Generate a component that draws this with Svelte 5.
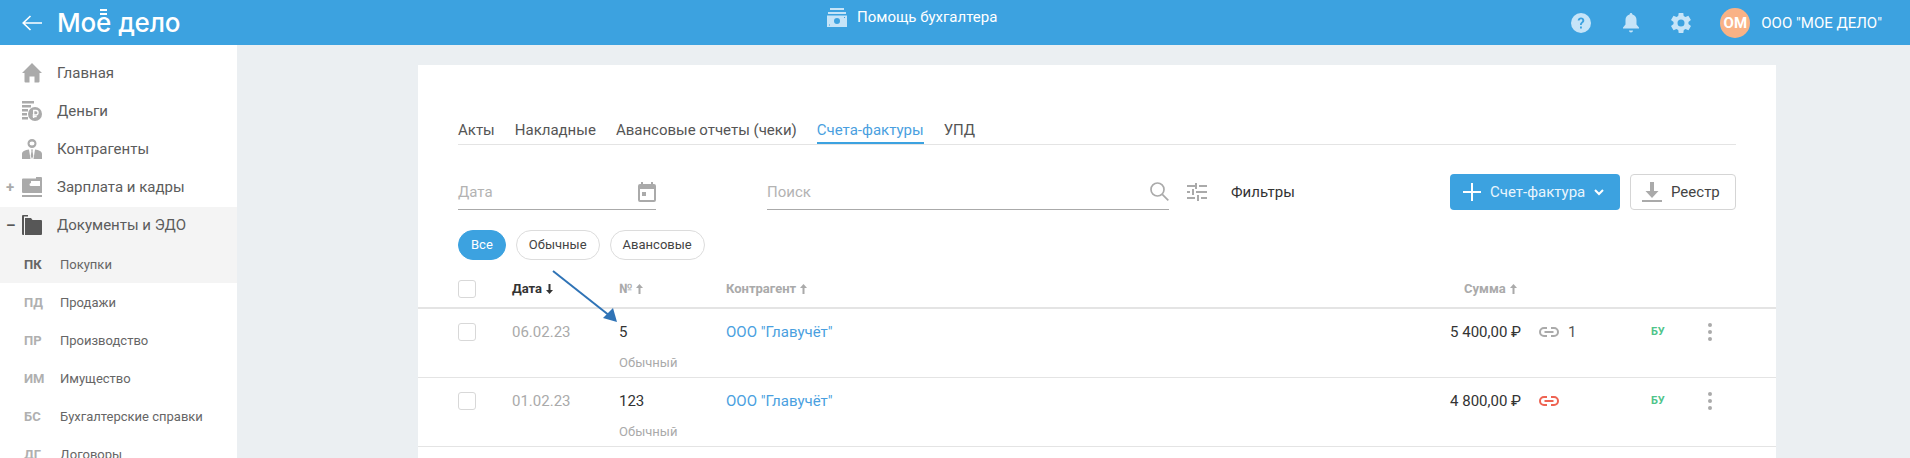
<script>
  const subs = [
    ['ПД', 'Продажи'],
    ['ПР', 'Производство'],
    ['ИМ', 'Имущество'],
    ['БС', 'Бухгалтерские справки'],
    ['ДГ', 'Договоры']
  ];
  const tabs = ['Акты', 'Накладные', 'Авансовые отчеты (чеки)', 'Счета-фактуры', 'УПД'];
  const rows = [
    { date: '06.02.23', num: '5', sum: '5 400,00 ₽', linked: true },
    { date: '01.02.23', num: '123', sum: '4 800,00 ₽', linked: false }
  ];
</script>

{#snippet up()}
  <svg class="sort" width="7" height="10" viewBox="0 0 7 10" fill="currentColor"><path d="M3.500 0 7 4H4.500v6h-2V4H0z"/></svg>
{/snippet}

<div class="page">
  <header class="top">
    <div class="brand">
      <svg class="back" width="20" height="16" viewBox="0 0 20 16" fill="none" stroke="#fff" stroke-width="1.6"><path d="M20 8H1M8.500 1 1.200 8l7.300 7"/></svg>
      <div class="logo"><span>Мо</span><span class="yo"><span class="yo-glyph">ё</span></span><span class="logo-sm">дело</span></div>
    </div>
    <div class="help">
      <svg width="20" height="20" viewBox="0 0 20 20" fill="#c6e4f8"><rect x="3" y="1" width="14" height="2"/><rect x="1" y="5" width="18" height="2"/><path fill-rule="evenodd" d="M0 8.500h20V20H0zM10 11a3 3 0 1 0 0 6 3 3 0 0 0 0-6zM2 17.500v1h1v-1zM17 10v1h1v-1z"/></svg>
      <span>Помощь бухгалтера</span>
    </div>
    <div class="tools">
      <svg class="tool" width="20" height="20" viewBox="0 0 20 20"><circle cx="10" cy="10" r="10" fill="#c6e4f8"/><path d="M6.700 7.600C6.800 5.600 8.200 4.500 10 4.500s3.300 1.100 3.300 2.900c0 2.300-2.500 2.400-2.500 4.600H9c0-3 2.300-3 2.300-4.600 0-.7-.5-1.200-1.300-1.200s-1.300.6-1.400 1.400zM9 13.500h1.900v2H9z" fill="#3ca2e0"/></svg>
      <svg class="tool" width="20" height="20" viewBox="0 0 20 20" fill="#c6e4f8"><path d="M10 0c.8 0 1.400.6 1.400 1.500 2.600.6 4.100 2.800 4.100 5.500v4.500l2.500 3v1H2v-1l2.500-3V7c0-2.700 1.500-4.900 4.100-5.500C8.600.6 9.200 0 10 0zM8 17.500h4c0 1.200-.9 2-2 2s-2-.8-2-2z"/></svg>
      <svg class="tool gear" width="20" height="20" viewBox="2 2 20 20" fill="#c6e4f8"><path fill-rule="evenodd" d="M19.400 13c.1-.3.100-.7.100-1s0-.7-.1-1l2.500-2-2.500-4.300-3 1.200c-.5-.4-1.100-.7-1.700-1L14.300 2H9.700l-.5 3c-.6.300-1.200.6-1.700 1l-3-1.200L2 9l2.600 2c-.1.300-.1.700-.1 1s0 .7.100 1L2 15l2.500 4.300 3-1.200c.5.400 1.100.7 1.700 1l.5 2.900h4.600l.5-3c.6-.3 1.200-.6 1.700-1l3 1.200L22 15zM12 15.500a3.500 3.500 0 1 1 0-7 3.500 3.500 0 0 1 0 7z"/></svg>
      <div class="avatar">ОМ</div>
      <span class="org">ООО "МОЕ ДЕЛО"</span>
    </div>
  </header>

  <div class="body">
    <nav class="side">
      <div class="nav-item">
        <svg class="nav-ico" width="20" height="20" viewBox="0 0 20 20" fill="#aaa"><path d="M10 0 20 10h-2.500v8.500q0 1-1 1H12.500v-6h-5v6H3.500q-1 0-1-1V10H0z"/></svg>
        <span>Главная</span>
      </div>
      <div class="nav-item">
        <svg class="nav-ico" width="20" height="20" viewBox="0 0 20 20" fill="#aaa"><rect x="0" y="0" width="12" height="2.500"/><rect x="0" y="4" width="9" height="2.500"/><rect x="0" y="8" width="6" height="2.500"/><rect x="0" y="12" width="5" height="2.500"/><rect x="0" y="16" width="6" height="2.500"/><circle cx="13" cy="13" r="7"/><path d="M11.700 17v-7.500h2.200a2 2 0 0 1 0 4.300h-3.200M10.700 15.500h4" fill="none" stroke="#fff" stroke-width="1.300"/></svg>
        <span>Деньги</span>
      </div>
      <div class="nav-item">
        <svg class="nav-ico" width="20" height="20" viewBox="0 0 20 20" fill="#aaa"><path fill-rule="evenodd" d="M10 0a4.500 4.500 0 1 1 0 9 4.500 4.500 0 0 1 0-9zm0 2.500a2.500 2 0 1 0 0 4 2.500 2 0 0 0 0-4z"/><path d="M0 20v-5c0-2.500 3-4 7-4.500L8.500 20zM20 20v-5c0-2.500-3-4-7-4.500L11.500 20zM9 10.500h2l-.5 1.500.8 5-1.300 3-1.300-3 .8-5z"/></svg>
        <span>Контрагенты</span>
      </div>
      <div class="nav-item">
        <span class="mark">+</span>
        <svg class="nav-ico" width="20" height="20" viewBox="0 0 20 20" fill="#aaa"><path fill-rule="evenodd" d="M0 2.500q0-1 1-1h13v-1.500h5q1 0 1 1V16H1q-1 0-1-1zM9 6a1 1 0 0 0 0 3h9V4H9z"/><rect x="0" y="18" width="20" height="2"/></svg>
        <span>Зарплата и кадры</span>
      </div>
      <div class="open">
        <div class="nav-item dark">
          <span class="mark">–</span>
          <svg class="nav-ico" width="20" height="20" viewBox="0 0 20 20" fill="#575757"><path d="M0 1q0-1 1-1h5v1.500H2V20H1q-1 0-1-1z"/><path d="M3 3h6l1.500 2H19q1 0 1 1v13q0 1-1 1H3z"/></svg>
          <span>Документы и ЭДО</span>
        </div>
        <div class="sub active"><b>ПК</b><span>Покупки</span></div>
      </div>
      {#each subs as s}
        <div class="sub"><b>{s[0]}</b><span>{s[1]}</span></div>
      {/each}
    </nav>

    <main class="main">
      <section class="card">
        <div class="tabs">
          {#each tabs as t}
            <div class="tab" class:on={t === 'Счета-фактуры'}>{t}</div>
          {/each}
        </div>

        <div class="filters">
          <div class="field date">
            <span>Дата</span>
            <svg width="18" height="20" viewBox="0 0 18 20" fill="#aaa"><path fill-rule="evenodd" d="M3 0h2v2h8V0h2v2h1q2 0 2 2v14q0 2-2 2H2q-2 0-2-2V4q0-2 2-2h1zM2 7v11h14V7zM4 10h4v4H4z"/></svg>
          </div>
          <div class="field search">
            <span>Поиск</span>
            <svg width="19" height="19" viewBox="0 0 19 19" fill="none" stroke="#aaa" stroke-width="1.700"><circle cx="7.500" cy="7.500" r="6.500"/><path d="m12.300 12.300 6 6"/></svg>
          </div>
          <svg class="fil-ico" width="20" height="18" viewBox="0 0 20 18" fill="#aaa"><path d="M0 2h9v2H0zM8 0h2v6H8zM12 2h8v2h-8zM0 8h3v2H0zM5 6h2v6H5zM9 8h11v2H9zM0 14h8v2H0zM10 12h2v6h-2zM14 14h6v2h-6z"/></svg>
          <span class="fil-txt">Фильтры</span>
          <div class="actions">
            <button class="btn primary">
              <svg width="18" height="18" viewBox="0 0 18 18" stroke="#fff" stroke-width="2"><path d="M9 0v18M0 9h18"/></svg>
              <span>Счет-фактура</span>
              <svg width="10" height="7" viewBox="0 0 10 7" fill="none" stroke="#fff" stroke-width="2"><path d="m1 1 4 4 4-4"/></svg>
            </button>
            <button class="btn ghost">
              <svg width="20" height="20" viewBox="0 0 20 20" fill="#aaa"><path d="M8 0h4v9h4.500L10 16 3.500 9H8zM0 18h20v2H0z"/></svg>
              <span>Реестр</span>
            </button>
          </div>
        </div>

        <div class="pills">
          <div class="pill sel">Все</div>
          <div class="pill">Обычные</div>
          <div class="pill">Авансовые</div>
        </div>

        <div class="grid head">
          <div class="box"></div>
          <div class="dark-h">Дата <svg class="sort flip" width="7" height="10" viewBox="0 0 7 10" fill="currentColor"><path d="M3.500 0 7 4H4.500v6h-2V4H0z"/></svg></div>
          <div>№ {@render up()}</div>
          <div>Контрагент {@render up()}</div>
          <div class="right sum-h">Сумма {@render up()}</div>
        </div>

        {#each rows as r}
          <div class="grid row">
            <div class="box"></div>
            <div class="muted">{r.date}</div>
            <div class="numcol"><div>{r.num}</div><small>Обычный</small></div>
            <div class="link">ООО "Главучёт"</div>
            <div class="right amount">{r.sum}</div>
            <div class="chain">
              <svg width="20" height="10" viewBox="0 0 20 10" fill="none" stroke={r.linked ? '#aaa' : '#ee6352'} stroke-width="2"><path d="M8 1H5a4 4 0 0 0 0 8h3M12 1h3a4 4 0 0 1 0 8h-3M5.500 5h9"/></svg>
              {#if r.linked}<span>1</span>{/if}
            </div>
            <div class="bu">БУ</div>
            <div class="dots"><span></span><span></span><span></span></div>
          </div>
        {/each}
      </section>
    </main>
  </div>

  <svg class="arrow" width="80" height="70" viewBox="0 0 80 70">
    <path d="M5 5 62 50" stroke="#2f73b6" stroke-width="2" fill="none"/>
    <path d="M69 56 55 52 65 42z" fill="#2f73b6"/>
  </svg>
</div>

<style>
  :global(body) { margin: 0; overflow: hidden; }
  .page { position: relative; height: 458px; overflow: hidden; background: #ebeff2; font-family: Roboto, sans-serif; color: #333; }
  .top { height: 45px; background: #3ca2e0; display: flex; align-items: center; position: relative; color: #fff; }
  .brand { display: flex; align-items: center; padding-left: 22px; gap: 15px; }
  .back { display: block; }
  .logo { font-family: Inter, sans-serif; font-size: 26px; line-height: 32px; letter-spacing: -0.2px; color: #fff; font-weight: 500; display: flex; align-items: baseline; }
  .yo { position: relative; display: inline-block; }
  .yo-glyph { display: inline-block; clip-path: inset(10.500px 0 0 0); }
  .yo::before { content: ""; position: absolute; left: 4px; right: 4px; top: 2px; height: 6px; border-top: 2px solid #fff; border-bottom: 2px solid #fff; box-sizing: border-box; }
  .logo-sm { margin-left: 7px; }
  .help { position: absolute; left: 827px; top: 7px; display: flex; align-items: center; gap: 10px; font-size: 15px; font-weight: 400; line-height: 20px; }
  .tools { margin-left: auto; display: flex; align-items: center; padding-right: 28px; }
  .tool { margin-right: 30px; display: block; }
  .tool.gear { margin-right: 29px; }
  .avatar { width: 30px; height: 30px; border-radius: 50%; background: #f9b286; color: #fff; font-weight: 700; font-size: 15px; line-height: 30px; text-align: center; margin-right: 11px; }
  .org { font-size: 15px; font-weight: 400; white-space: nowrap; }

  .body { display: flex; height: 413px; }
  .side { width: 237px; background: #fff; padding-top: 9px; box-sizing: border-box; flex: none; overflow: hidden; }
  .nav-item { height: 38px; display: flex; align-items: center; padding-left: 22px; font-size: 15px; color: #5c5c5c; position: relative; }
  .nav-ico { margin-right: 15px; flex: none; display: block; }
  .mark { position: absolute; left: 6px; top: 9px; font-size: 15px; line-height: 20px; font-weight: 700; color: #aaa; }
  .dark .mark { color: #575757; top: 8px; }
  .open { background: #f4f4f4; margin-top: 1px; height: 76px; }
  .open .dark { height: 36px; }
  .sub.active { margin-top: 2px; }
  .sub { height: 38px; display: flex; align-items: center; padding-left: 24px; font-size: 13px; color: #666; }
  .sub b { width: 36px; color: #b0b0b0; font-weight: 700; flex: none; }
  .sub.active b { color: #666; }

  .main { flex: 1; padding: 20px 134px 0 181px; min-width: 0; }
  .card { background: #fff; height: 393px; overflow: hidden; }
  .tabs { margin: 0 40px; padding-top: 49px; height: 30px; display: flex; gap: 20px; border-bottom: 1px solid #e4e4e4; font-size: 15px; }
  .tab { height: 30px; line-height: 32px; box-sizing: border-box; color: #555; white-space: nowrap; }
  .tab.on { color: #4a9fe0; border-bottom: 2px solid #3ca2e0; }
  .filters { margin: 29px 40px 0; height: 36px; display: flex; align-items: flex-start; font-size: 15px; }
  .field { height: 36px; box-sizing: border-box; border-bottom: 1px solid #aaa; display: flex; align-items: center; justify-content: space-between; color: #b3b3b3; }
  .date { width: 198px; margin-right: 111px; }
  .search { width: 402px; margin-right: 18px; }
  .fil-ico { margin-top: 9px; flex: none; }
  .fil-txt { margin-left: 24px; line-height: 36px; font-size: 15px; color: #333; }
  .actions { margin-left: auto; display: flex; gap: 10px; }
  .btn { height: 36px; box-sizing: border-box; border-radius: 4px; font: 15px/1 Roboto, sans-serif; display: flex; align-items: center; padding: 0; }
  .primary { width: 170px; background: #3ca2e0; border: 0; color: #e9f5fd; padding-left: 13px; }
  .primary span { margin: 0 9px 0 9px; }
  .ghost { width: 106px; background: #fff; border: 1px solid #d5d5d5; color: #444; padding-left: 11px; }
  .ghost span { margin-left: 9px; }
  .pills { margin: 20px 40px 0; display: flex; gap: 10px; }
  .pill { height: 30px; box-sizing: border-box; border: 1px solid #dcdcdc; border-radius: 15px; padding: 0 12px; line-height: 28px; font-size: 13px; color: #444; }
  .pill.sel { background: #3ca2e0; border-color: #3ca2e0; color: #fff; }

  .grid { display: grid; grid-template-columns: 54px 107px 107px 573px 240px 112px 53px 12px; padding-left: 40px; }
  .head { margin-top: 10px; height: 37px; border-bottom: 2px solid #e4e4e4; align-items: center; font-size: 13px; font-weight: 700; color: #aaa; }
  .sort { display: inline-block; vertical-align: -1px; margin-left: 1px; }
  .flip { transform: rotate(180deg); }
  .dark-h { color: #333; }
  .sum-h { padding-right: 22px; }
  .right { text-align: right; }
  .row { height: 69px; box-sizing: border-box; border-bottom: 1px solid #e4e4e4; padding-top: 13px; align-items: start; font-size: 15px; line-height: 20px; }
  .box { width: 18px; height: 18px; box-sizing: border-box; border: 1px solid #d8d8d8; border-radius: 3px; }
  .row .box { margin-top: 1px; }
  .muted { color: #aaa; }
  .numcol small { display: block; font-size: 13px; line-height: 16px; margin-top: 13px; color: #aaa; }
  .link { color: #4a9fe0; }
  .amount { padding-right: 18px; color: #333; }
  .chain { display: flex; align-items: center; gap: 9px; height: 20px; color: #555; }
  .bu { font-size: 11px; font-weight: 700; color: #4fc48a; }
  .dots { display: flex; flex-direction: column; align-items: center; gap: 3px; padding-top: 1px; }
  .dots span { width: 4px; height: 4px; border-radius: 50%; background: #aaa; }
  .arrow { position: absolute; left: 548px; top: 266px; }
</style>
